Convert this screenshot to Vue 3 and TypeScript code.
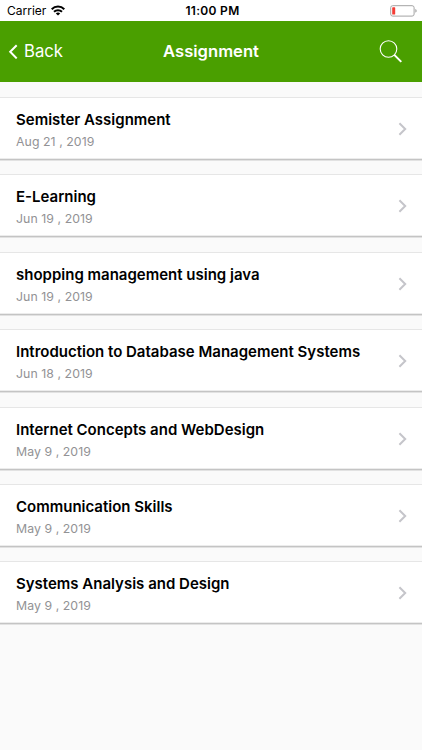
<script setup lang="ts">
interface Assignment {
  title: string
  date: string
}

const assignments: Assignment[] = [
  { title: 'Semister Assignment', date: 'Aug 21 , 2019' },
  { title: 'E-Learning', date: 'Jun 19 , 2019' },
  { title: 'shopping management using java', date: 'Jun 19 , 2019' },
  { title: 'Introduction to Database Management Systems', date: 'Jun 18 , 2019' },
  { title: 'Internet Concepts and WebDesign', date: 'May 9 , 2019' },
  { title: 'Communication Skills', date: 'May 9 , 2019' },
  { title: 'Systems Analysis and Design', date: 'May 9 , 2019' },
]
</script>

<template>
  <div class="screen">
    <div class="status">
      <div class="carrier">
        <span>Carrier</span>
        <svg class="wifi" width="14" height="11" viewBox="0 0 14 11" fill="none" stroke="#000" stroke-width="2">
          <path d="M.7 4.2C4.2.7 9.8.7 13.3 4.2" />
          <path d="M3 6.8C5.2 4.7 8.8 4.7 11 6.8" />
          <path d="M7 10.6 4.8 8.4C6 7.3 8 7.3 9.2 8.4Z" fill="#000" stroke="none" />
        </svg>
      </div>
      <span class="clock">11:00 PM</span>
      <svg class="battery" width="28" height="12" viewBox="0 0 28 12">
        <rect x="0.7" y="0.7" width="23.4" height="10.4" rx="2" fill="#fff" stroke="#a3a3a3" />
        <rect x="2.2" y="2.3" width="3" height="7.2" rx="0.6" fill="#f43c35" />
        <path d="M25.3 4.1C27.1 4.4 27.1 7.4 25.3 7.7Z" fill="#a3a3a3" />
      </svg>
    </div>
    <header class="nav">
      <button class="back" type="button">
        <svg width="10" height="16" viewBox="0 0 10 16" fill="none" stroke="currentColor" stroke-width="2">
          <path d="M8.7 2.2 2.2 8.8l6.5 6.6" />
        </svg>
        <span>Back</span>
      </button>
      <h1>Assignment</h1>
      <button class="search" type="button" aria-label="Search">
        <svg width="24" height="24" viewBox="0 0 24 24" fill="none" stroke="currentColor">
          <circle cx="9.5" cy="10" r="8.3" stroke-width="1.1" />
          <path d="m15.3 15.9 7 7" stroke-width="2" />
        </svg>
      </button>
    </header>
    <main class="list">
      <article v-for="item in assignments" :key="item.title" class="card">
        <div class="info">
          <h2>{{ item.title }}</h2>
          <p>{{ item.date }}</p>
        </div>
        <svg width="10" height="14" viewBox="0 0 10 14" fill="none" stroke="#c5c5ca" stroke-width="2">
          <path d="m1.4 1.3 5.8 5.7-5.8 5.7" />
        </svg>
      </article>
    </main>
  </div>
</template>

<style>
body {
  background: #fafafa;
}
</style>

<style scoped>
.screen {
  height: 750px;
  overflow: hidden;
  background: #fafafa;
  font-family: Inter, "Liberation Sans", sans-serif;
  color: #000;
}
.status,
.nav {
  display: grid;
  grid-template-columns: 1fr auto 1fr;
  align-items: center;
}
.status {
  height: 21px;
  padding: 0 4px 0 7px;
  background: #fff;
  font-size: 12px;
}
.carrier {
  display: flex;
  align-items: center;
  gap: 5px;
}
.clock {
  font-weight: 600;
  letter-spacing: 0.3px;
}
.battery {
  justify-self: end;
}
.nav {
  box-sizing: border-box;
  height: 61px;
  padding: 0 19px 1px 8px;
  background: #4a9f00;
  color: #fff;
}
button {
  display: flex;
  align-items: center;
  padding: 0;
  border: 0;
  background: none;
  color: inherit;
  font: inherit;
}
.back {
  gap: 6px;
  font-size: 16.7px;
}
.search {
  justify-self: end;
}
h1,
h2,
p {
  margin: 0;
}
h1 {
  padding-left: 11px;
  font-size: 16.6px;
  font-weight: 600;
  line-height: 20px;
}
.list {
  display: flex;
  flex-direction: column;
  gap: 14.4px;
  padding-top: 15px;
}
.card {
  box-sizing: border-box;
  display: flex;
  align-items: center;
  justify-content: space-between;
  height: 63px;
  padding: 1px 14px 0 16px;
  border-top: 1px solid #e6e6e6;
  border-bottom: 1px solid #c4c4c4;
  background: #fff;
  box-shadow: inset 0 -1px #ececec, 0 1px #e2e2e2;
}
.info {
  padding-top: 3px;
}
h2 {
  font-size: 15px;
  font-weight: 600;
  line-height: 20px;
}
p {
  margin-top: 3px;
  font-size: 12.3px;
  line-height: 18px;
  letter-spacing: 0.06px;
  color: #929295;
}
</style>
